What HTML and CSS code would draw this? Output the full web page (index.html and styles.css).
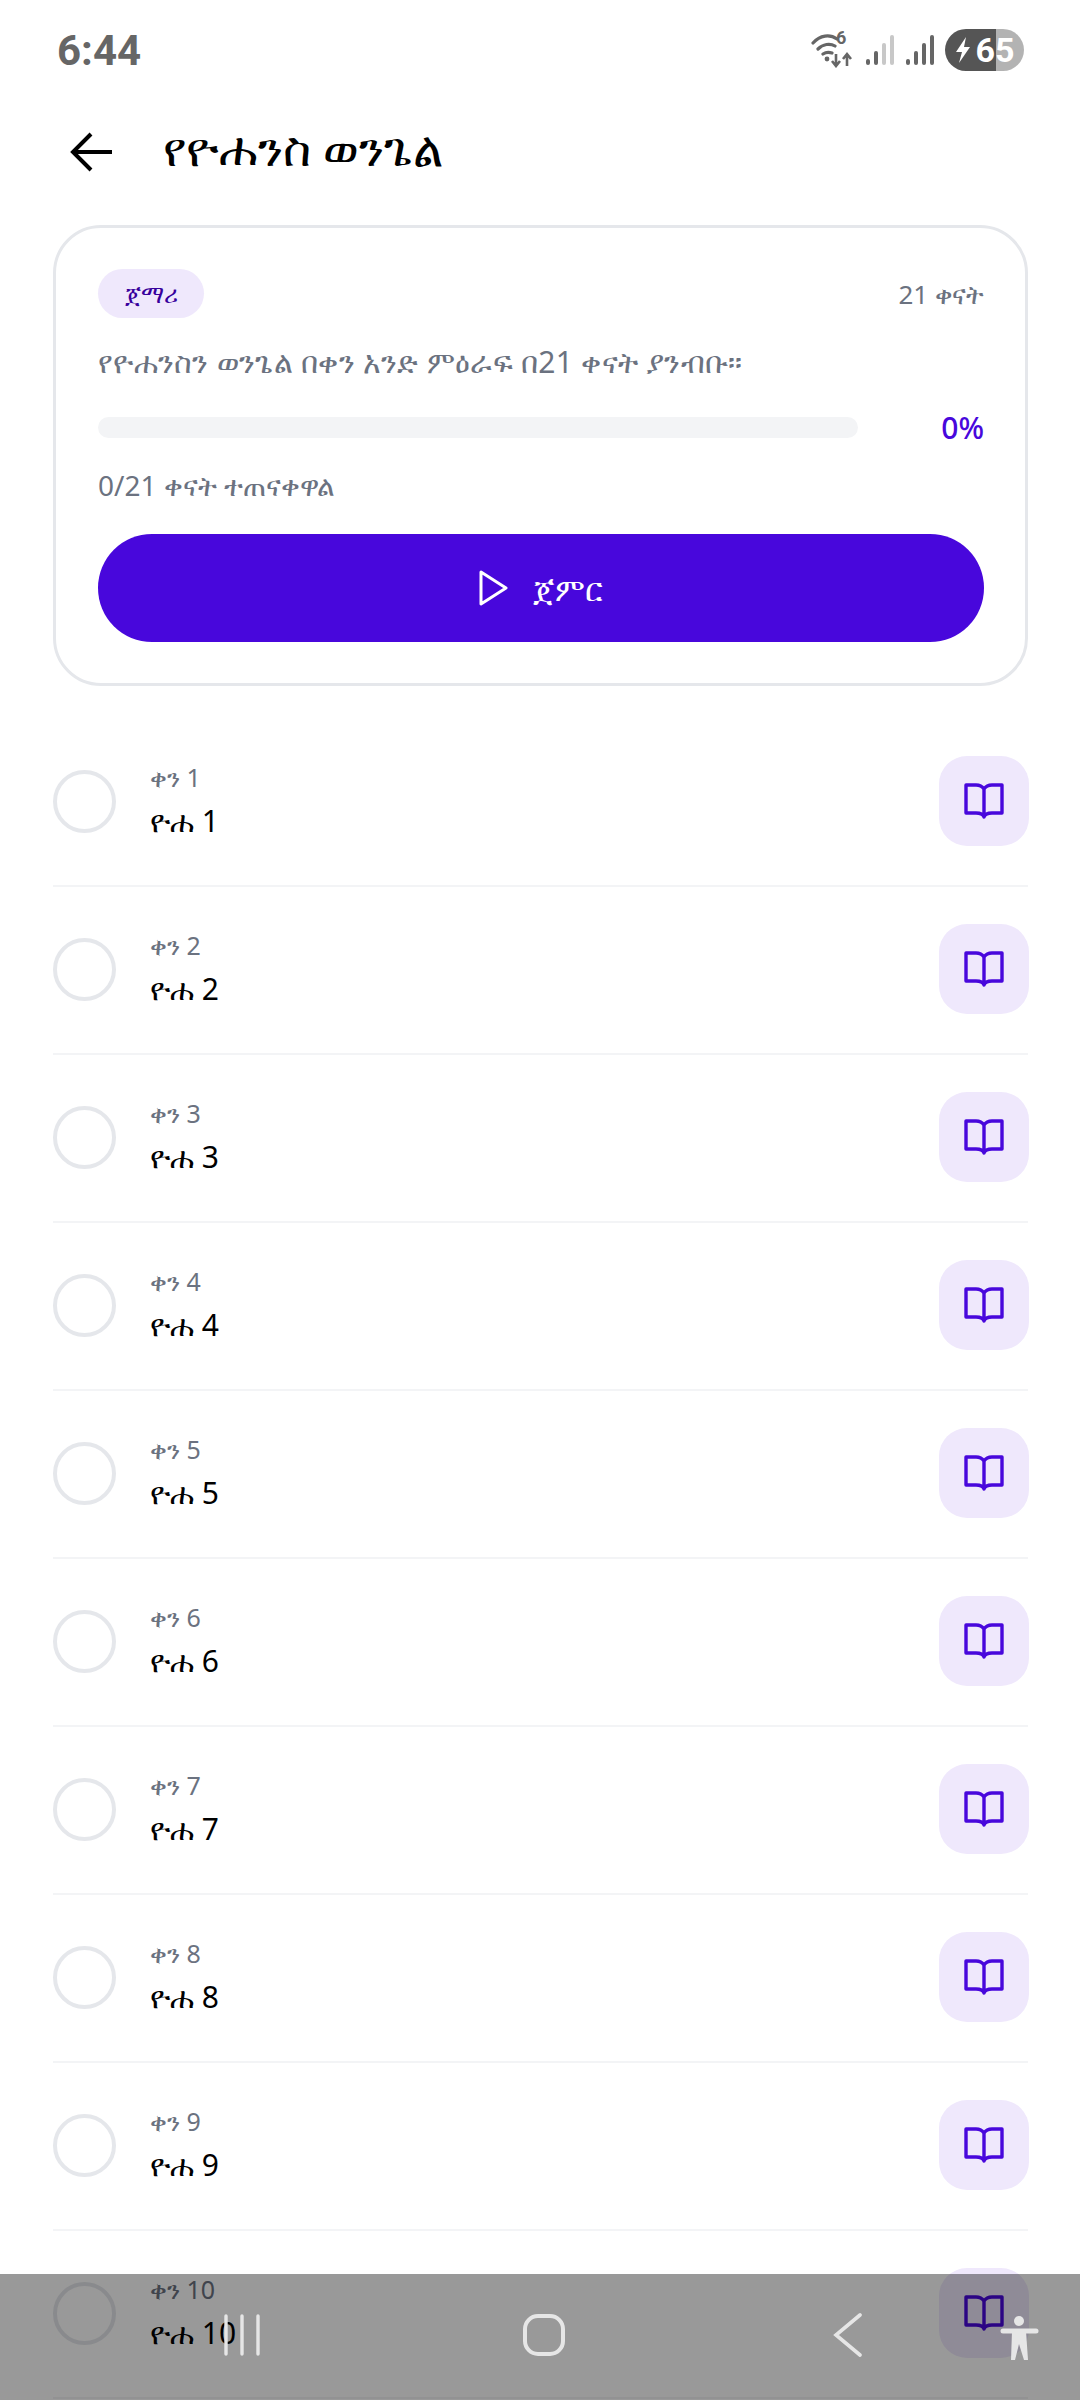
FILE: index.html
```html
<!DOCTYPE html>
<html lang="am">

<head>
    <meta charset="utf-8">
    <title>የዮሐንስ ወንጌል</title>
    <link rel="stylesheet" href="styles.css">
</head>

<body>
    <svg class="defs" width="0" height="0">
        <symbol id="book" viewBox="0 0 40 36">
            <path d="M20 6C18 3 15 2 12 2H2V30H12C16 30 19 31 20 34C21 31 24 30 28 30H38V2H28C25 2 22 3 20 6ZM20 6V34" fill="none" stroke="currentColor" stroke-width="3.4" stroke-linejoin="round" stroke-linecap="round" />
        </symbol>
    </svg>

    <!--status bar-->
    <div class="status">
        <span class="clock">6:44</span>
        <div class="status-icons">
            <div class="wifi">
                <svg width="44" height="36" viewBox="0 0 44 36">
                    <path d="M2 11C9 3 19 2 26 7M7 17C12 12 19 11 24 14M12 22C15 20 18 20 21 21" fill="none" stroke="#666" stroke-width="3.2" stroke-linecap="round" />
                    <circle cx="16" cy="27" r="2.4" fill="#666" />
                    <path d="M25 22V33M21 29L25 34L29 29M36 34V23M32 27L36 22L40 27" fill="none" stroke="#666" stroke-width="2.6" />
                </svg>
                <span class="wifi-six">6</span>
            </div>
            <svg width="30" height="32" viewBox="0 0 30 32">
                <rect x="1" y="25" width="4" height="6" rx="2" fill="#666" />
                <rect x="9" y="17" width="4" height="14" rx="2" fill="#666" />
                <rect x="17" y="9" width="4" height="22" rx="2" fill="#c8c8c8" />
                <rect x="25" y="1" width="4" height="30" rx="2" fill="#c8c8c8" />
            </svg>
            <svg width="30" height="32" viewBox="0 0 30 32">
                <rect x="1" y="25" width="4" height="6" rx="2" fill="#666" />
                <rect x="9" y="17" width="4" height="14" rx="2" fill="#666" />
                <rect x="17" y="9" width="4" height="22" rx="2" fill="#666" />
                <rect x="25" y="1" width="4" height="30" rx="2" fill="#666" />
            </svg>
            <div class="battery">
                <svg width="18" height="28" viewBox="0 0 18 28">
                    <path d="M12 1L2 16H8L5 27L16 11H10Z" fill="#fff" />
                </svg>
                <span>65</span>
            </div>
        </div>
    </div>

    <div class="header">
        <svg class="back" width="44" height="40" viewBox="0 0 44 40">
            <path d="M42 20H3M21 2L3 20L21 38" fill="none" stroke="#000" stroke-width="4" />
        </svg>
        <h1>የዮሐንስ ወንጌል</h1>
    </div>

    <!--plan card-->
    <div class="card">
        <div class="card-top">
            <span class="pill">ጀማሪ</span>
            <span class="days">21 ቀናት</span>
        </div>
        <p class="desc">የዮሐንስን ወንጌል በቀን አንድ ምዕራፍ በ21 ቀናት ያንብቡ።</p>
        <div class="progress">
            <div class="track"></div>
            <span class="percent">0%</span>
        </div>
        <p class="done">0/21 ቀናት ተጠናቀዋል</p>
        <div class="start">
            <svg width="30" height="36" viewBox="0 0 30 36">
                <path d="M2 2L27 18L2 34Z" fill="none" stroke="#fff" stroke-width="3" stroke-linejoin="round" />
            </svg>
            <span>ጀምር</span>
        </div>
    </div>

    <!--chapter list-->
    <div class="list">
        <div class="row">
            <div class="circle"></div>
            <div class="labels"><span class="day">ቀን 1</span><span class="chapter">ዮሐ 1</span></div>
            <div class="read"><svg width="40" height="36"><use href="#book" /></svg></div>
        </div>
        <div class="row">
            <div class="circle"></div>
            <div class="labels"><span class="day">ቀን 2</span><span class="chapter">ዮሐ 2</span></div>
            <div class="read"><svg width="40" height="36"><use href="#book" /></svg></div>
        </div>
        <div class="row">
            <div class="circle"></div>
            <div class="labels"><span class="day">ቀን 3</span><span class="chapter">ዮሐ 3</span></div>
            <div class="read"><svg width="40" height="36"><use href="#book" /></svg></div>
        </div>
        <div class="row">
            <div class="circle"></div>
            <div class="labels"><span class="day">ቀን 4</span><span class="chapter">ዮሐ 4</span></div>
            <div class="read"><svg width="40" height="36"><use href="#book" /></svg></div>
        </div>
        <div class="row">
            <div class="circle"></div>
            <div class="labels"><span class="day">ቀን 5</span><span class="chapter">ዮሐ 5</span></div>
            <div class="read"><svg width="40" height="36"><use href="#book" /></svg></div>
        </div>
        <div class="row">
            <div class="circle"></div>
            <div class="labels"><span class="day">ቀን 6</span><span class="chapter">ዮሐ 6</span></div>
            <div class="read"><svg width="40" height="36"><use href="#book" /></svg></div>
        </div>
        <div class="row">
            <div class="circle"></div>
            <div class="labels"><span class="day">ቀን 7</span><span class="chapter">ዮሐ 7</span></div>
            <div class="read"><svg width="40" height="36"><use href="#book" /></svg></div>
        </div>
        <div class="row">
            <div class="circle"></div>
            <div class="labels"><span class="day">ቀን 8</span><span class="chapter">ዮሐ 8</span></div>
            <div class="read"><svg width="40" height="36"><use href="#book" /></svg></div>
        </div>
        <div class="row">
            <div class="circle"></div>
            <div class="labels"><span class="day">ቀን 9</span><span class="chapter">ዮሐ 9</span></div>
            <div class="read"><svg width="40" height="36"><use href="#book" /></svg></div>
        </div>
        <div class="row">
            <div class="circle"></div>
            <div class="labels"><span class="day">ቀን 10</span><span class="chapter">ዮሐ 10</span></div>
            <div class="read"><svg width="40" height="36"><use href="#book" /></svg></div>
        </div>
    </div>

    <!--system nav over the page-->
    <div class="navbar">
        <svg class="nav-recents" width="40" height="42" viewBox="0 0 40 42">
            <path d="M4 2V40M20 2V40M36 2V40" fill="none" stroke="#e6e6e6" stroke-width="3.4" stroke-linecap="round" />
        </svg>
        <svg class="nav-home" width="44" height="44" viewBox="0 0 44 44">
            <rect x="3" y="3" width="38" height="38" rx="13" fill="none" stroke="#e6e6e6" stroke-width="4" />
        </svg>
        <svg class="nav-back" width="30" height="44" viewBox="0 0 30 44">
            <path d="M27 2L3 22L27 42" fill="none" stroke="#e6e6e6" stroke-width="3.6" stroke-linecap="round" />
        </svg>
        <svg class="nav-access" width="40" height="46" viewBox="0 0 40 46">
            <circle cx="19" cy="6" r="5" fill="#e6e6e6" />
            <path d="M3 16H36" fill="none" stroke="#e6e6e6" stroke-width="5" stroke-linecap="round" />
            <path d="M12 16H26L28 45H24L19 29L15 45H11Z" fill="#e6e6e6" />
        </svg>
    </div>
</body>

</html>
```

FILE: styles.css
```css
* {
    margin: 0;
    padding: 0;
    box-sizing: border-box;
}

html,
body {
    height: 2400px;
    overflow: hidden;
}

body {
    position: relative;
    background: #fff;
    font-family: "Noto Sans", "DejaVu Sans", sans-serif;
    padding: 0 52px 0 53px;
}

.defs {
    position: absolute;
}

.status {
    height: 94px;
    display: flex;
    justify-content: space-between;
    align-items: center;
    padding: 6px 0 0 4px;
}

.clock {
    font-family: Roboto, sans-serif;
    font-size: 42px;
    font-weight: 700;
    color: #666;
}

.status-icons {
    display: flex;
    align-items: center;
    gap: 10px;
    margin-right: 4px;
}

.wifi {
    position: relative;
    width: 44px;
    height: 36px;
}

.wifi-six {
    position: absolute;
    left: 25px;
    top: -4px;
    font-family: Roboto, sans-serif;
    font-size: 18px;
    line-height: 20px;
    font-weight: 700;
    color: #666;
}

.battery {
    width: 79px;
    height: 42px;
    border-radius: 21px;
    background: linear-gradient(to right, #555 64%, #b3b3b3 64%);
    display: flex;
    align-items: center;
    justify-content: center;
    gap: 3px;
    color: #fff;
    font-family: Roboto, sans-serif;
    font-size: 34px;
    font-weight: 700;
}

.header {
    height: 131px;
    display: flex;
    align-items: flex-start;
    gap: 49px;
    padding: 28px 0 0 17px;
}

.back {
    margin-top: 10px;
}

.header h1 {
    font-size: 48px;
    line-height: 52px;
    font-weight: 400;
    color: #000;
}

.card {
    height: 461px;
    border: 3px solid #e5e7eb;
    border-radius: 48px;
    padding: 41px 41px 0 42px;
}

.card-top {
    display: flex;
    justify-content: space-between;
    align-items: center;
}

.pill {
    width: 106px;
    height: 49px;
    border-radius: 25px;
    background: #efe8fc;
    color: #37009c;
    font-size: 24px;
    display: flex;
    align-items: center;
    justify-content: center;
}

.days {
    font-size: 26px;
    color: #6b7280;
}

.desc {
    font-size: 30px;
    letter-spacing: 0.28px;
    color: #6b7280;
    margin-top: 24px;
    line-height: 40px;
}

.progress {
    display: flex;
    align-items: center;
    justify-content: space-between;
    margin-top: 27px;
    height: 36px;
}

.track {
    width: 760px;
    height: 21px;
    border-radius: 11px;
    background: #f3f4f6;
}

.percent {
    font-size: 30px;
    font-weight: 500;
    color: #4807dc;
}

.done {
    font-size: 28px;
    color: #6b7280;
    margin-top: 22px;
    line-height: 36px;
}

.start {
    height: 108px;
    margin-top: 31px;
    border-radius: 54px;
    background: #4807dc;
    color: #fff;
    font-size: 32px;
    display: flex;
    align-items: center;
    justify-content: center;
    gap: 24px;
}

.list {
    margin-top: 33px;
}

.row {
    height: 168px;
    display: flex;
    align-items: center;
    padding-bottom: 2px;
    border-bottom: 2px solid #f3f4f6;
}

.circle {
    width: 63px;
    height: 63px;
    border: 4px solid #e5e7eb;
    border-radius: 50%;
    flex-shrink: 0;
}

.labels {
    flex: 1;
    display: flex;
    flex-direction: column;
    gap: 9px;
    margin-left: 34px;
}

.day {
    font-size: 25px;
    color: #6b7280;
    line-height: 30px;
}

.chapter {
    font-size: 30px;
    color: #000;
    line-height: 40px;
}

.read {
    width: 90px;
    height: 90px;
    margin-right: -1px;
    border-radius: 28px;
    background: #efe8fc;
    color: #4807dc;
    display: flex;
    align-items: center;
    justify-content: center;
}

.navbar {
    position: absolute;
    left: 0;
    top: 2274px;
    width: 1080px;
    height: 126px;
    background: rgba(0, 0, 0, 0.4);
}

.navbar svg {
    position: absolute;
}

.nav-recents {
    left: 222px;
    top: 40px;
}

.nav-home {
    left: 522px;
    top: 39px;
}

.nav-back {
    left: 833px;
    top: 39px;
}

.nav-access {
    left: 1000px;
    top: 41px;
}
```
